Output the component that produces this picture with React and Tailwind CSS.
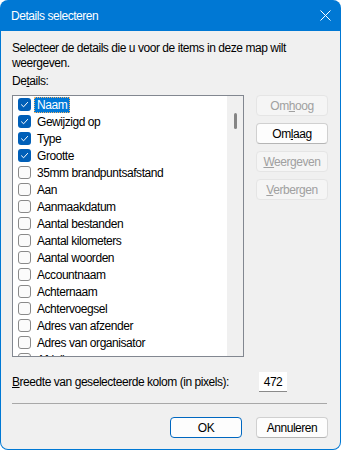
const items = [
  { label: 'Naam', checked: true, selected: true },
  { label: 'Gewijzigd op', checked: true },
  { label: 'Type', checked: true },
  { label: 'Grootte', checked: true },
  { label: '35mm brandpuntsafstand' },
  { label: 'Aan' },
  { label: 'Aanmaakdatum' },
  { label: 'Aantal bestanden' },
  { label: 'Aantal kilometers' },
  { label: 'Aantal woorden' },
  { label: 'Accountnaam' },
  { label: 'Achternaam' },
  { label: 'Achtervoegsel' },
  { label: 'Adres van afzender' },
  { label: 'Adres van organisator' },
  { label: 'Afdeling' },
];

const Checkbox = ({ checked }) =>
  checked ? (
    <span className="w-[13px] h-[13px] rounded-[3px] bg-[#005fb8] flex items-center justify-center shrink-0">
      <svg width="13" height="13" viewBox="0 0 13 13" fill="none">
        <path d="M3.5 6.8 L5.6 8.8 L9.6 4.4" stroke="#fff" strokeWidth="1" strokeLinecap="round" strokeLinejoin="round" />
      </svg>
    </span>
  ) : (
    <span className="w-[13px] h-[13px] rounded-[3px] border border-[#8a8a8a] bg-[#fbfbfb] shrink-0" />
  );

const SideButton = ({ children, enabled }) => (
  <button
    className={
      enabled
        ? 'h-[21px] w-[72px] rounded-[4px] bg-[#fdfdfd] border border-[#d0d0d0] border-b-[#b5b5b5] text-black'
        : 'h-[21px] w-[72px] rounded-[4px] bg-[#f5f5f5] border border-[#e5e5e5] text-[#a0a0a0]'
    }
  >
    {children}
  </button>
);

export default function App() {
  return (
    <div className="w-[341px] h-[450px] bg-[#0078d4] rounded-[8px] px-[1px] pb-[1px] flex flex-col font-[Liberation_Sans,Arial,sans-serif] text-[12px] tracking-[-0.45px] text-black">
      <div className="h-[31px] shrink-0 flex items-center justify-between pl-[10px] pr-[10px] text-white">
        <span>Details selecteren</span>
        <svg width="11" height="11" viewBox="0 0 11 11" className="mr-[-1px]">
          <path d="M0.5 0.5 L10.5 10.5 M10.5 0.5 L0.5 10.5" stroke="#fff" strokeWidth="1" />
        </svg>
      </div>

      <div className="flex-1 bg-[#f0f0f0] rounded-b-[7px] pl-[11px] pr-[12px] pt-[10px] flex flex-col">
        <p className="leading-[15px] whitespace-nowrap">
          Selecteer de details die u voor de items in deze map wilt
          <br />
          weergeven.
        </p>
        <div className="leading-[15px] mt-[3px]">
          De<span className="underline">t</span>ails:
        </div>

        <div className="flex gap-[12px] mt-[6px]">
          <div className="w-[232px] h-[262px] border border-[#828790] bg-white flex overflow-hidden">
            <div className="flex-1 flex flex-col overflow-hidden">
              {items.map((item) => (
                <div key={item.label} className="h-[17px] shrink-0 flex items-center pl-[5px] whitespace-nowrap">
                  <Checkbox checked={item.checked} />
                  {item.selected ? (
                    <span className="ml-[3px] h-[16px] px-[2px] flex items-center bg-[#0078d7] text-white border border-dotted border-[#f3b46b] leading-none">
                      {item.label}
                    </span>
                  ) : (
                    <span className="ml-[6px] leading-none">{item.label}</span>
                  )}
                </div>
              ))}
            </div>
            <div className="w-[16px] bg-[#f0f0f0] flex justify-center pt-[17px]">
              <div className="w-[3px] h-[16px] rounded-full bg-[#858585]" />
            </div>
          </div>

          <div className="flex flex-col gap-[7px]">
            <SideButton>
              Om<span className="underline">h</span>oog
            </SideButton>
            <SideButton enabled>
              Om<span className="underline">l</span>aag
            </SideButton>
            <SideButton>
              <span className="underline">W</span>eergeven
            </SideButton>
            <SideButton>
              <span className="underline">V</span>erbergen
            </SideButton>
          </div>
        </div>

        <div className="flex items-center mt-[15px] h-[20px]">
          <span className="whitespace-nowrap">
            <span className="underline">B</span>reedte van geselecteerde kolom (in pixels):
          </span>
          <div className="ml-auto mr-[41px] w-[28px] h-[20px] bg-white border-b border-[#8a8a8a] flex items-center justify-center">
            472
          </div>
        </div>

        <div className="h-px bg-[#a8a8a8] mt-[11px] mr-[1px]" />

        <div className="flex justify-end gap-[14px] mt-[13px]">
          <button className="h-[21px] w-[72px] rounded-[4px] bg-[#fdfdfd] border-[1.5px] border-[#0067c0]">
            OK
          </button>
          <button className="h-[21px] w-[72px] rounded-[4px] bg-[#fdfdfd] border border-[#d0d0d0] border-b-[#b5b5b5]">
            Annuleren
          </button>
        </div>
      </div>
    </div>
  );
}
